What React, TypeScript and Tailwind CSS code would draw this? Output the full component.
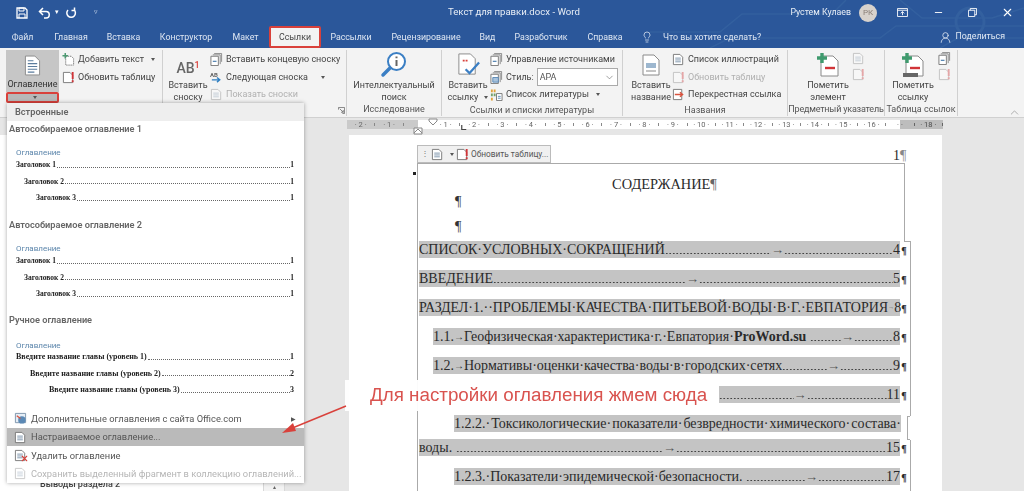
import { ReactNode } from 'react';
import { X, Minus, ChevronDown, ChevronUp, Lightbulb, UserRound } from 'lucide-react';

const ui = "font-['Roboto','Open_Sans',sans-serif]";
const serif = "font-['Liberation_Serif','Times_New_Roman',serif]";

const tabs = [
  { label: 'Файл', w: 'w-[45px]' },
  { label: 'Главная', w: 'w-[52px]' },
  { label: 'Вставка', w: 'w-[53px]' },
  { label: 'Конструктор', w: 'w-[72px]' },
  { label: 'Макет', w: 'w-[47px]' },
];
const tabsRight = [
  { label: 'Рассылки', w: 'w-[60px]' },
  { label: 'Рецензирование', w: 'w-[90px]' },
  { label: 'Вид', w: 'w-[33px]' },
  { label: 'Разработчик', w: 'w-[74px]' },
  { label: 'Справка', w: 'w-[54px]' },
];

function DocIcon({ className = '' }: { className?: string }) {
  return (
    <svg viewBox="0 0 18 22" className={className}>
      <path d="M1.500 1h10l5 5v15h-15z" fill="#fff" stroke="#8a8a8a" />
      <path d="M4 6h6M4 9h10M4 12h10M4 15h10M4 18h7" stroke="#5b7c9d" strokeWidth="1.200" />
    </svg>
  );
}

function SmallDoc({ faded = false, mark = false, lines = false }: { faded?: boolean; mark?: boolean; lines?: boolean }) {
  return (
    <svg viewBox="0 0 14 14" className={`w-[13px] h-[13px] shrink-0 ${faded ? 'opacity-40' : ''}`}>
      <path d="M1.500 1.500h7l3 3v8h-10z" fill="#fff" stroke="#777" />
      {lines && <path d="M3.500 5.500h6M3.500 7.500h6M3.500 9.500h6" stroke="#7b93ab" />}
      {mark && <path d="M11.500 1v7.500M11.500 10v2" stroke="#d13438" strokeWidth="2" />}
    </svg>
  );
}

function AddTextIcon() {
  return (
    <svg viewBox="0 0 14 14" className="w-[13px] h-[13px] shrink-0">
      <path d="M4 3.500h6l2.500 2.500v7H4z" fill="#fff" stroke="#777" strokeDasharray="1.500 .8" />
      <path d="M3.500 0v6M.5 3h6" stroke="#4d9a72" strokeWidth="1.600" />
    </svg>
  );
}

function StackIcon({ blue = false }: { blue?: boolean }) {
  return (
    <svg viewBox="0 0 14 14" className="w-[13px] h-[13px] shrink-0">
      <path d="M4.500.5h8v9" fill="none" stroke="#888" />
      <path d="M3 2h8v10" fill="none" stroke="#888" />
      <path d="M1 3.500h8v10H1z" fill="#fff" stroke="#777" />
      {blue && <path d="M3 7h6v5H3z" fill="#a9c3dc" stroke="#5b89b5" />}
      {!blue && <path d="M3 9h4" stroke="#5b89b5" strokeWidth="1.400" />}
    </svg>
  );
}

function NextNoteIcon() {
  return (
    <svg viewBox="0 0 14 14" className="w-[13px] h-[13px] shrink-0">
      <text x="0" y="6.500" fontSize="6.500" fontWeight="700" fill="#666" fontFamily="Roboto">AB</text>
      <path d="M2 9.500h8M7.500 7l3 2.500-3 2.500" fill="none" stroke="#2f7fc1" strokeWidth="1.500" />
    </svg>
  );
}

function BooksIcon() {
  return (
    <svg viewBox="0 0 14 14" className="w-[13px] h-[13px] shrink-0">
      <path d="M1 1.500h2v3H1zM4 1.500h2v3H4z" fill="#e2a23b" />
      <path d="M1 6h2v3H1zM4 6h2v3H4z" fill="#74a06c" />
      <path d="M1 10.500h2v3H1z" fill="#e2a23b" />
      <path d="M7 6h6v7.500H7z" fill="#fff" stroke="#777" />
      <path d="M8.500 9h3M8.500 11h3" stroke="#5b89b5" />
    </svg>
  );
}

function CrossRefIcon() {
  return (
    <svg viewBox="0 0 14 14" className="w-[13px] h-[13px] shrink-0">
      <path d="M1.500 1.500h9v11h-9z" fill="#fff" stroke="#777" />
      <path d="M3 7h8M8.500 4.500 11.500 7l-3 2.500" fill="none" stroke="#d9533f" strokeWidth="1.400" />
    </svg>
  );
}

function MarkIcon({ scroll = false }: { scroll?: boolean }) {
  return (
    <svg viewBox="0 0 26 26" className="w-[26px] h-[26px]">
      <path d="M6 4h12l5 5v15H6z" fill="#fff" stroke="#8a8a8a" />
      {scroll && <path d="M3 21h15v4H3z" fill="#666" />}
      <path d="M10 16h10" stroke="#d13438" strokeWidth="2.400" />
      <path d="M7 1v10M2 6h10" stroke="#3f9a6e" strokeWidth="3.400" />
    </svg>
  );
}

function Caret() {
  return <span className="inline-block w-0 h-0 border-x-[2.500px] border-x-transparent border-t-[3px] border-t-[#555] ml-1 align-middle" />;
}

function RibbonLine({ icon, children, muted = false }: { icon: ReactNode; children: ReactNode; muted?: boolean }) {
  return (
    <div className={`h-[17.500px] flex items-center gap-[3px] whitespace-nowrap ${muted ? 'text-[#b0b0b0]' : 'text-[#444]'}`}>
      {icon}
      {children}
    </div>
  );
}

function Group({ w, label, labelClass = '', children }: { w: string; label?: string; labelClass?: string; children: ReactNode }) {
  return (
    <div className={`${w} shrink-0 h-[66px] border-r border-[#d0d0d0] flex flex-col`}>
      <div className="h-[55px] flex">{children}</div>
      <div className={`text-center text-[9px] leading-[13px] text-[#555] whitespace-nowrap ${labelClass}`}>{label}</div>
    </div>
  );
}

function BigButton({ icon, lines, w }: { icon: ReactNode; lines: ReactNode[]; w: string }) {
  return (
    <div className={`${w} shrink-0 flex flex-col items-center`}>
      <div className="h-[29px] flex items-center justify-center">{icon}</div>
      {lines.map((l, i) => (
        <div key={i} className="text-[9px] leading-[12px] text-[#444] whitespace-nowrap">{l}</div>
      ))}
    </div>
  );
}

function Dots({ w }: { w?: string }) {
  return <span className={`${w ?? 'flex-1 min-w-0'} h-[3.500px] self-end mb-[3px] bg-[radial-gradient(circle,#444_0.8px,transparent_1.100px)] bg-[length:3.500px_3.500px] bg-repeat-x`} />;
}

function TocRow({ label, num, arrow, pad = 'pl-0', mt = 'mt-[12px]', tight = false }: { label?: ReactNode; num: string; arrow: string; pad?: string; mt?: string; tight?: boolean }) {
  return (
    <div className={`h-[17px] flex ${mt} ${pad}`}>
      <div className="flex-1 min-w-0 bg-[#c4c4c4] flex items-center whitespace-nowrap">
        {label}
        <Dots />
        <span className={`text-[#555] ${tight ? 'text-[6px]' : 'text-[13px]'}`}>→</span>
        <Dots w={arrow} />
        <span>{num}</span>
      </div>
      <span className="w-[8px] text-[10px] font-bold text-center leading-[20px]">¶</span>
    </div>
  );
}

function MenuSample({ title, mb }: { title: string; mb: string }) {
  const rows = [
    { t: 'Заголовок 1', c: 'pl-0 mb-[8.500px]' },
    { t: 'Заголовок 2', c: 'pl-[8px] mb-[8.500px]' },
    { t: 'Заголовок 3', c: 'pl-[20px]' },
  ];
  return (
    <div className={mb}>
      <div className="pl-[2px] text-[9.200px] leading-[14px] font-semibold text-[#666]">{title}</div>
      <div className="pl-[9px] mt-[12px] text-[8px] leading-[10px] text-[#5b85ab]">Оглавление</div>
      <div className={`pl-[9px] pr-[10px] mt-[3px] ${serif} text-[7.500px] leading-[8px] font-bold text-[#222]`}>
        {rows.map((r) => (
          <div key={r.t} className={`flex whitespace-nowrap ${r.c}`}>
            {r.t}
            <span className="flex-1 min-w-0 border-b border-dotted border-[#666] mb-[1.500px] ml-[1px]" />
            1
          </div>
        ))}
      </div>
    </div>
  );
}

const manualRows = [
  { t: 'Введите название главы (уровень 1)', n: '1', c: 'pl-0 font-bold' },
  { t: 'Введите название главы (уровень 2)', n: '2', c: 'pl-[14px]' },
  { t: 'Введите название главы (уровень 3)', n: '3', c: 'pl-[33px]' },
];

function MenuItem({ icon, children, active = false, muted = false }: { icon: ReactNode; children: ReactNode; active?: boolean; muted?: boolean }) {
  return (
    <div className={`h-[18.300px] flex items-center text-[9.300px] whitespace-nowrap ${active ? 'bg-[#bababa]' : ''} ${muted ? 'text-[#b5b5b5]' : 'text-[#555]'}`}>
      <span className="w-[24px] pl-[2px] flex justify-center shrink-0">{icon}</span>
      {children}
    </div>
  );
}

export default function App() {
  const rulerLeft = ['2', '1'];
  const rulerRight = ['1', '2', '3', '4', '5', '6', '7', '8', '9', '10', '11', '12', '13', '14', '15', '16', '', '18'];

  return (
    <div className={`relative w-[1024px] h-[491px] overflow-hidden bg-[#e6e6e6] ${ui}`}>
      {/* title bar */}
      <div className="relative h-[48px] bg-[#2b579a] text-white text-[8.800px]">
        <svg viewBox="0 0 374 48" className="absolute left-[650px] top-0 w-[374px] h-[48px]">
          <path d="M0 32h70l22-18h90l14-14M60 48l20-10h150l16-12h128M250 0l22 18h70l32-10M290 48l18-10h66" fill="none" stroke="#33609f" strokeWidth="1.500" />
          <circle cx="320" cy="22" r="14" fill="none" stroke="#33609f" strokeWidth="3" />
        </svg>
        <div className="h-[25px] flex items-center pl-[16px] relative">
          <svg viewBox="0 0 12 12" className="w-[12px] h-[12px]">
            <path d="M1 1h8l2 2v8H1z" fill="none" stroke="#fff" strokeWidth="1.300" />
            <path d="M3 1h5v3H3zM3 11V7h6v4" fill="none" stroke="#fff" />
          </svg>
          <svg viewBox="0 0 14 12" className="w-[14px] h-[12px] ml-[10px]">
            <path d="M5 1 1.500 4.500 5 8M2 4.500h6a3.200 3.200 0 0 1 0 6.500H6" fill="none" stroke="#fff" strokeWidth="1.500" />
          </svg>
          <span className="text-[7px] ml-[3px]">▾</span>
          <svg viewBox="0 0 12 12" className="w-[12px] h-[12px] ml-[6px]">
            <path d="M3 3a4.300 4.300 0 1 0 6-.2M9.500 .5v3h-3" fill="none" stroke="#fff" strokeWidth="1.500" />
          </svg>
          <span className="ml-[17px] text-[7px] text-[#c8d6ea]">▿</span>
          <span className="absolute left-[448px] top-[5px] text-[9.600px] leading-[14px] text-[#e8eef6] whitespace-nowrap">Текст для правки.docx&nbsp;-&nbsp;Word</span>
          <div className="ml-auto flex items-center relative">
            <span className="text-[8.800px] text-[#e8eef6]">Рустем Кулаев</span>
            <span className="w-[18px] h-[18px] rounded-full bg-[#d8d2cc] text-[#8a7f78] text-[8px] flex items-center justify-center ml-[8px]">РК</span>
            <svg viewBox="0 0 12 10" className="w-[11px] h-[9px] ml-[20px]">
              <path d="M.5.5h11v9H.5zM.5 2.500h11" fill="none" stroke="#fff" />
              <path d="M6 8V4M4 6l2-2 2 2" fill="none" stroke="#fff" />
            </svg>
            <Minus size={11} className="ml-[25px]" />
            <svg viewBox="0 0 10 10" className="w-[9px] h-[9px] ml-[24px]">
              <path d="M.5 2.500h7v7h-7zM2.500 2.500v-2h7v7h-2" fill="none" stroke="#fff" />
            </svg>
            <X size={13} className="ml-[24px] mr-[10px]" />
          </div>
        </div>
        <div className="relative h-[23px] flex items-end text-[#dfe7f3]">
          {tabs.map((t) => (
            <span key={t.label} className={`${t.w} h-[22px] leading-[22px] text-center shrink-0`}>{t.label}</span>
          ))}
          <span className="w-[52px] h-[22px] shrink-0 bg-[#f3f3f3] border-2 border-[#d9413b] rounded-[2px] text-[#444] text-center leading-[18px]">Ссылки</span>
          {tabsRight.map((t) => (
            <span key={t.label} className={`${t.w} h-[22px] leading-[22px] text-center shrink-0`}>{t.label}</span>
          ))}
          <Lightbulb size={12} className="ml-[9px] mb-[5px] shrink-0" strokeWidth={1.500} />
          <span className="h-[22px] leading-[22px] ml-[10px] whitespace-nowrap">Что вы хотите сделать?</span>
          <span className="ml-auto mr-[19px] h-[22px] flex items-center gap-[3px]">
            <UserRound size={13} strokeWidth={1.500} />
            Поделиться
          </span>
        </div>
      </div>

      {/* ribbon */}
      <div className="h-[70px] bg-[#f3f3f3] border-b border-[#d0d0d0] flex pt-[2px] text-[9px] relative">
        <Group w="w-[163px]">
          <div className="ml-[6px] w-[53px] h-[42px] bg-[#c6c6c6] flex flex-col items-center pt-[5px] shrink-0 relative">
            <DocIcon className="w-[17px] h-[21px]" />
            <span className="leading-[14px] mt-[1px] text-[#333]">Оглавление</span>
            <span className="absolute left-0 top-[42px] w-[53px] h-[11px] bg-[#b8b8b8] border-2 border-[#d9413b] rounded-[2px] flex items-center justify-center"><Caret /></span>
          </div>
          <div className="ml-[3px] pt-[1px]">
            <RibbonLine icon={<AddTextIcon />}>Добавить текст <Caret /></RibbonLine>
            <RibbonLine icon={<SmallDoc mark />}>Обновить таблицу</RibbonLine>
          </div>
        </Group>
        <Group w="w-[184px]">
          <BigButton
            w="w-[48px] ml-[1px]"
            icon={<span className="text-[14px] text-[#666] font-medium leading-none pt-[6px]">AB<sup className="text-[#d9413b] text-[9px]">1</sup></span>}
            lines={['Вставить', 'сноску']}
          />
          <div className="pt-[1px] ml-[-2px]">
            <RibbonLine icon={<StackIcon />}>Вставить концевую сноску</RibbonLine>
            <RibbonLine icon={<NextNoteIcon />}>Следующая сноска<span className="ml-[6px]"><Caret /></span></RibbonLine>
            <RibbonLine muted icon={<SmallDoc faded lines />}>Показать сноски</RibbonLine>
          </div>
          <svg viewBox="0 0 8 8" className="w-[7px] h-[7px] absolute left-[338px] top-[59px]">
            <path d="M.5 3V.5H7.500V7.500H5M2 2l4 4M6 3.500V6H3.500" fill="none" stroke="#777" />
          </svg>
        </Group>
        <Group w="w-[95px]" label="Исследование">
          <BigButton
            w="w-full"
            icon={
              <svg viewBox="0 0 28 28" className="w-[28px] h-[28px]">
                <circle cx="16.500" cy="10.500" r="8.500" fill="#fff" stroke="#3b7fc4" strokeWidth="2" />
                <path d="M10 17 3 24" stroke="#3b7fc4" strokeWidth="3.500" strokeLinecap="round" />
                <path d="M16.500 9v6M16.500 5.500v1.800" stroke="#666" strokeWidth="2" />
              </svg>
            }
            lines={['Интеллектуальный', 'поиск']}
          />
        </Group>
        <Group w="w-[181px]" label="Ссылки и списки литературы">
          <BigButton
            w="w-[48px] ml-[2px]"
            icon={
              <svg viewBox="0 0 26 26" className="w-[25px] h-[25px]">
                <path d="M3 2h12l5 5v16H3z" fill="#fff" stroke="#8a8a8a" />
                <path d="M7 9h6" stroke="#d9413b" strokeWidth="2" strokeDasharray="2 1" />
                <path d="m10 18 4 4 10-11" fill="none" stroke="#3b7fc4" strokeWidth="2.400" />
              </svg>
            }
            lines={['Вставить', <>ссылку <Caret /></>]}
          />
          <div className="pt-[1px] ml-[-2px]">
            <RibbonLine icon={<StackIcon />}>Управление источниками</RibbonLine>
            <RibbonLine icon={<StackIcon blue />}>
              Стиль:
              <span className="w-[81px] h-[18px] bg-white border border-[#aaa] flex items-center justify-between px-[2px] text-[#555]">
                APA
                <ChevronDown size={11} strokeWidth={1.200} />
              </span>
            </RibbonLine>
            <RibbonLine icon={<BooksIcon />}>Список литературы<Caret /></RibbonLine>
          </div>
        </Group>
        <Group w="w-[165px]" label="Названия">
          <BigButton
            w="w-[48px] ml-[4px]"
            icon={
              <svg viewBox="0 0 18 22" className="w-[18px] h-[22px]">
                <path d="M1 1h11l5 5v15H1z" fill="#fff" stroke="#8a8a8a" />
                <path d="M4 9h10v5H4z" fill="#9db7cf" />
                <path d="M4 17h10" stroke="#888" />
              </svg>
            }
            lines={['Вставить', 'название']}
          />
          <div className="pt-[1px] ml-[-3px]">
            <RibbonLine icon={<SmallDoc lines />}>Список иллюстраций</RibbonLine>
            <RibbonLine muted icon={<SmallDoc faded mark />}>Обновить таблицу</RibbonLine>
            <RibbonLine icon={<CrossRefIcon />}>Перекрестная ссылка</RibbonLine>
          </div>
        </Group>
        <Group w="w-[97px]" label="Предметный указатель" labelClass="tracking-[-0.2px]">
          <BigButton w="w-[48px] ml-[16px]" icon={<MarkIcon />} lines={['Пометить', 'элемент']} />
          <div className="pt-[2px] flex flex-col gap-[3px]">
            <SmallDoc faded lines />
            <SmallDoc faded mark />
          </div>
        </Group>
        <Group w="w-[73px]" label="Таблица ссылок">
          <BigButton w="w-[56px]" icon={<MarkIcon scroll />} lines={['Пометить', 'ссылку']} />
          <div className="pt-[2px] ml-[-3px] flex flex-col gap-[3px]">
            <StackIcon />
            <SmallDoc faded mark />
          </div>
        </Group>
        <ChevronUp size={13} strokeWidth={1.200} className="absolute left-[1008px] top-[58px] text-[#888]" />
      </div>

      {/* ruler */}
      <div className="h-[17px] pt-[2px] pl-[347px]">
        <div className="relative w-[596px] h-[9px] bg-white flex text-[7.500px] leading-[9px] text-[#666] text-center">
          <div className="w-[71px] bg-[#cacaca] flex shrink-0">
            {rulerLeft.map((n) => (
              <span key={n} className="w-[28.400px] shrink-0 flex items-center">
                <span className="flex-1">· {n} ·</span>
                <span className="w-px h-[3px] bg-[#888]" />
              </span>
            ))}
          </div>
          <div className="flex-1 flex pl-[14px] overflow-hidden">
            {rulerRight.map((n, i) => (
              <span key={i} className="w-[28.400px] shrink-0 flex items-center">
                <span className="flex-1">· {n} ·</span>
                <span className="w-px h-[3px] bg-[#888]" />
              </span>
            ))}
          </div>
          <div className="absolute left-[553px] top-0 w-[43px] h-full bg-[#bdbdbd] mix-blend-multiply" />
          <svg viewBox="0 0 10 18" className="absolute left-[66px] top-[-2px] w-[10px] h-[18px]">
            <path d="M1 15l4-4 4 4M1 10h8v6H1z" fill="#fff" stroke="#888" />
          </svg>
          <svg viewBox="0 0 10 8" className="absolute left-[81px] top-[-2px] w-[10px] h-[8px]">
            <path d="M1 1h8v2l-4 4-4-4z" fill="#fff" stroke="#888" />
          </svg>
          <svg viewBox="0 0 8 8" className="absolute left-[114px] top-[5px] w-[6px] h-[6px]">
            <path d="M1 0v6h6" fill="none" stroke="#444" strokeWidth="1.600" />
          </svg>
        </div>
      </div>

      {/* navigation pane and page */}
      <div className="flex h-[356px]">
        <div className="w-[263px] bg-white flex flex-col justify-end shrink-0 text-[9px] text-[#444] font-medium pl-[40px] leading-[13px]">Выводы раздела 2</div>
        <div className="w-[22px] bg-[#f3f3f3] border-x border-[#d8d8d8] shrink-0 flex flex-col justify-end items-center text-[6px] text-[#666]">▴</div>
        <div className="w-[64px] shrink-0" />
        <div className={`relative w-[593px] h-full bg-white shrink-0 ${serif} text-[14px] leading-[17px] text-[#2a2a2a] pl-[70px] pr-[34px]`}>
          <div className="h-[106px] relative">
            <div className="absolute left-[-1px] right-[-3px] top-[41px] text-center text-[14.400px]">СОДЕРЖАНИЕ<span className="text-[#666]">¶</span></div>
            <div className="absolute left-[36px] top-[58px] text-[#333]">¶</div>
            <div className="absolute left-[36px] top-[83px] text-[#333]">¶</div>
          </div>
          <TocRow mt="mt-0" label="СПИСОК·УСЛОВНЫХ·СОКРАЩЕНИЙ" num="4" arrow="w-[109px]" />
          <TocRow label="ВВЕДЕНИЕ" num="5" arrow="w-[194px]" />
          <TocRow label="РАЗДЕЛ·1.··ПРОБЛЕМЫ·КАЧЕСТВА·ПИТЬЕВОЙ·ВОДЫ·В·Г.·ЕВПАТОРИЯ" num="8" arrow="w-0" tight />
          <TocRow
            pad="pl-[14px]"
            label={<>1.1.<span className="text-[10px]">→</span>Геофизическая·характеристика·г.·Евпатория·<b>ProWord.su</b>&nbsp;</>}
            num="8"
            arrow="w-[39px]"
          />
          <TocRow pad="pl-[14px]" label={<>1.2.<span className="text-[10px]">→</span>Нормативы·оценки·качества·воды·в·городских·сетях</>} num="9" arrow="w-[53px]" />
          <TocRow pad="pl-[300px]" num="11" arrow="w-[80px]" />
          <div className="h-[17px] mt-[12px] ml-[35px] mr-[7px] bg-[#c4c4c4] flex justify-between whitespace-nowrap">
            <span>1.2.2.·</span>
            <span>Токсикологические·</span>
            <span>показатели·</span>
            <span>безвредности·</span>
            <span>химического·</span>
            <span>состава·</span>
          </div>
          <TocRow mt="mt-[7px]" label={<>воды.&nbsp;</>} num="15" arrow="w-[210px]" />
          <TocRow pad="pl-[35px]" label={<>1.2.3.·Показатели·эпидемической·безопасности.&nbsp;</>} num="17" arrow="w-[68px]" />

          {/* content control frame */}
          <div className="absolute left-[68px] top-[28px] w-[488px] h-[78px] border-t border-r border-[#aaa] pointer-events-none" />
          <div className="absolute left-[68px] top-[28px] bottom-0 border-l border-[#aaa]" />
          <div className="absolute left-[555px] top-[106px] w-[7px] h-[175px] border-t border-r border-[#aaa]" />
          <div className="absolute left-[558px] top-[281px] w-[3px] h-[24px] border-y border-l border-[#aaa]" />
          <div className="absolute left-[561px] top-[305px] bottom-0 border-r border-[#aaa]" />
          <div className="absolute left-[68px] top-[10px] w-[134px] h-[18px] bg-[#f0f0f0] border border-[#bbb] flex items-center gap-[2px] pl-[3px] font-['Roboto',sans-serif] text-[8.300px] text-[#555] whitespace-nowrap">
            <span className="text-[8px] leading-none text-[#777]">⋮</span>
            <SmallDoc lines />
            <Caret />
            <SmallDoc mark />
            Обновить таблицу...
          </div>
          <div className="absolute left-[544px] top-[12px] text-[14px]">1<span className="text-[#888]">¶</span></div>
          <div className="absolute left-[64px] top-[37px] w-[3px] h-[3px] bg-[#222]" />
        </div>
      </div>

      {/* dropdown */}
      <div className="absolute left-[7px] top-[103px] w-[297px] h-[380px] bg-white shadow-[0_0_4px_rgba(0,0,0,0.35)] flex flex-col">
        <div className="h-[18px] bg-[#eeeeee] pl-[8px] text-[9.200px] leading-[18px] font-semibold text-[#666]">Встроенные</div>
        <div className="pt-[1px]">
          <MenuSample title="Автособираемое оглавление 1" mb="mb-[16px]" />
          <MenuSample title="Автособираемое оглавление 2" mb="mb-[15px]" />
          <div>
            <div className="pl-[2px] text-[9.200px] leading-[14px] font-semibold text-[#666]">Ручное оглавление</div>
            <div className="pl-[9px] mt-[14px] text-[8px] leading-[10px] text-[#5b85ab]">Оглавление</div>
            <div className={`pl-[9px] pr-[10px] mt-[2px] ${serif} text-[8px] leading-[8px] text-[#222] font-semibold flex flex-col gap-[8.500px]`}>
              {manualRows.map((r) => (
                <div key={r.n} className={`flex whitespace-nowrap ${r.c}`}>
                  {r.t}
                  <span className="flex-1 min-w-0 border-b border-dotted border-[#666] mb-[1.500px] ml-[1px] font-normal" />
                  {r.n}
                </div>
              ))}
            </div>
          </div>
        </div>
        <div className="mt-auto">
          <MenuItem icon={
            <svg viewBox="0 0 14 14" className="w-[13px] h-[13px]">
              <path d="M1.500 1.500h11v10h-11z" fill="#e6eef6" stroke="#7b93ab" />
              <circle cx="8.500" cy="8.500" r="4" fill="#5b89b5" />
              <path d="M3 4l4 3" stroke="#d9533f" strokeWidth="1.400" />
            </svg>
          }>
            <span className="flex-1">Дополнительные оглавления с сайта Office.com</span>
            <span className="text-[6px] mr-[8px]">▶</span>
          </MenuItem>
          <MenuItem active icon={<SmallDoc lines />}>Настраиваемое оглавление...</MenuItem>
          <MenuItem icon={<span className="relative"><SmallDoc lines /><X size={9} strokeWidth={3} className="absolute right-[-2px] bottom-[-1px] text-[#d9413b]" /></span>}>Удалить оглавление</MenuItem>
          <MenuItem muted icon={<SmallDoc faded lines />}>Сохранить выделенный фрагмент в коллекцию оглавлений...</MenuItem>
        </div>
      </div>

      {/* annotation */}
      <div className="absolute left-[345px] top-[380px] w-[374px] h-[31px] bg-white/95 flex items-center pl-[25px] font-['Liberation_Sans',Arial,sans-serif] text-[18.800px] text-[#d9534f] whitespace-nowrap">
        Для настройки оглавления жмем сюда
      </div>
      <svg className="absolute left-[280px] top-[404px] w-[68px] h-[33px]" viewBox="0 0 68 33">
        <path d="M66 2 10 25" stroke="#d9413b" strokeWidth="1.400" />
        <path d="M2 29 13 19 16 27z" fill="#d9413b" />
      </svg>
    </div>
  );
}
